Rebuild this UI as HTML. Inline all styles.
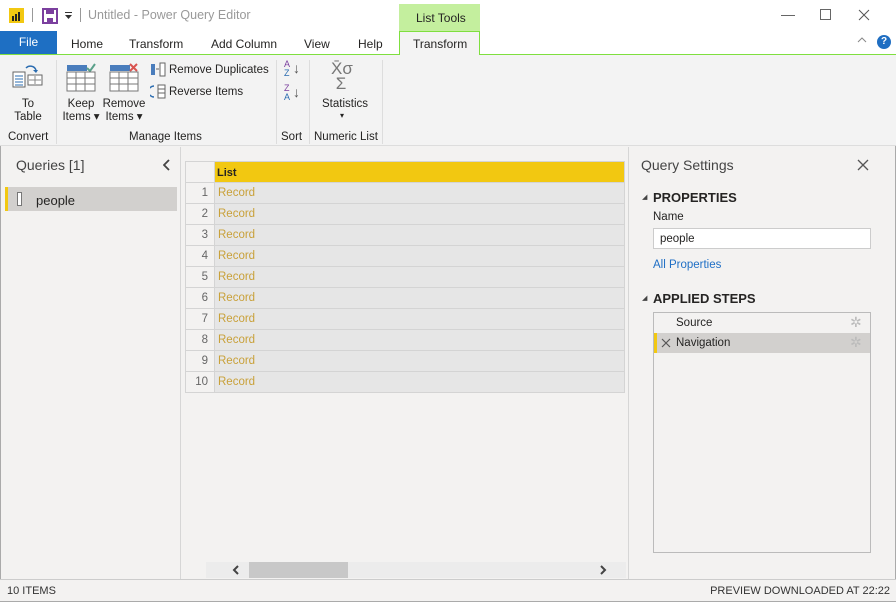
<!DOCTYPE html>
<html><head><meta charset="utf-8"><style>
*{box-sizing:border-box;margin:0;padding:0}
body{width:896px;height:602px;position:relative;overflow:hidden;background:#f3f2f1;font-family:"Liberation Sans",sans-serif;font-size:11.5px;color:#252423;outline:1px solid #aaa;outline-offset:-1px}
.a{position:absolute}
.t{white-space:nowrap}
</style></head><body>
<div class="a" style="left:0;top:0;width:896px;height:55px;background:#fff"></div>
<div class="a" style="left:9px;top:8px;width:15px;height:15px;background:#f2c811"></div>
<svg class="a" style="left:9px;top:8px" width="15" height="15"><rect x="3" y="8" width="2" height="5" fill="#222"/><rect x="6" y="6" width="2" height="7" fill="#222"/><rect x="9" y="4" width="2" height="9" fill="#222"/></svg>
<div class="a" style="left:32px;top:8px;width:1px;height:14px;background:#999"></div>
<svg class="a" style="left:42px;top:8px" width="16" height="16"><rect x="1" y="1" width="14" height="14" fill="none" stroke="#7b3f9e" stroke-width="2"/><rect x="4" y="2" width="8" height="4" fill="#7b3f9e"/><rect x="5" y="10" width="6" height="4" fill="#7b3f9e"/></svg>
<svg class="a" style="left:64px;top:12px" width="9" height="8"><rect x="1" y="0" width="7" height="1" fill="#333"/><path d="M1 3h7l-3.5 4z" fill="#333"/></svg>
<div class="a" style="left:80px;top:8px;width:1px;height:14px;background:#999"></div>
<div class="a t" style="left:88px;top:8px;font-size:12.5px;color:#999">Untitled - Power Query Editor</div>
<div class="a" style="left:399px;top:4px;width:81px;height:28px;background:#c4ef9e"></div>
<div class="a t" style="left:416px;top:11px;font-size:12px">List Tools</div>
<div class="a" style="left:781px;top:15px;width:14px;height:1px;background:#666"></div>
<div class="a" style="left:820px;top:9px;width:11px;height:11px;border:1px solid #666"></div>
<svg class="a" style="left:858px;top:9px" width="12" height="12"><path d="M1 1L11 11M11 1L1 11" stroke="#555" stroke-width="1"/></svg>
<div class="a" style="left:0;top:31px;width:57px;height:23px;background:#1e6fc3;color:#fff;text-align:center;line-height:23px;font-size:12px">File</div>
<div class="a t" style="left:71px;top:37px;font-size:12px">Home</div>
<div class="a t" style="left:129px;top:37px;font-size:12px">Transform</div>
<div class="a t" style="left:211px;top:37px;font-size:12px">Add Column</div>
<div class="a t" style="left:304px;top:37px;font-size:12px">View</div>
<div class="a t" style="left:358px;top:37px;font-size:12px">Help</div>
<div class="a" style="left:0;top:54px;width:896px;height:1px;background:#7fdf3f"></div>
<div class="a" style="left:399px;top:31px;width:81px;height:24px;background:#f3f3f3;border:1px solid #7fdf3f;border-bottom:none"></div>
<div class="a t" style="left:413px;top:37px;font-size:12px">Transform</div>
<svg class="a" style="left:857px;top:37px" width="10" height="6"><path d="M1 5L5 1L9 5" stroke="#888" fill="none"/></svg>
<div class="a" style="left:877px;top:35px;width:14px;height:14px;border-radius:50%;background:#1f6ec2;color:#fff;font-weight:bold;font-size:10px;text-align:center;line-height:14px">?</div>
<div class="a" style="left:0;top:55px;width:896px;height:91px;background:#f3f3f3;border-bottom:1px solid #ddd"></div>
<svg class="a" style="left:12px;top:62px" width="32" height="30"><path d="M14 6a6 6 0 0 1 10 2" stroke="#2b6cb0" fill="none" stroke-width="1.5"/><path d="M21 8h5l-2 3z" fill="#2b6cb0"/><rect x="1" y="10" width="12" height="15" fill="#fff" stroke="#666"/><path d="M3 14h8M3 17h8M3 20h8M3 23h8" stroke="#2b6cb0"/><rect x="16" y="13" width="14" height="10" fill="#fff" stroke="#666"/><path d="M17 18h12M23 14v8" stroke="#888"/></svg>
<div class="a" style="left:0;top:98px;width:56px;text-align:center;line-height:13px">To<br>Table</div>
<div class="a t" style="left:8px;top:131px">Convert</div>
<div class="a" style="left:56px;top:60px;width:1px;height:84px;background:#ddd"></div>
<svg class="a" style="left:66px;top:62px" width="30" height="30"><rect x="1" y="3" width="20" height="6" fill="#4a7dbc"/><path d="M21 6l3 3 5-7" stroke="#5aa08a" stroke-width="2" fill="none"/><rect x="1" y="10" width="28" height="19" fill="#fff" stroke="#777"/><path d="M1 16h28M1 22h28M10 10v19M19 10v19" stroke="#777"/></svg>
<div class="a" style="left:60px;top:98px;width:42px;text-align:center;line-height:13px">Keep<br>Items ▾</div>
<svg class="a" style="left:109px;top:62px" width="30" height="30"><rect x="1" y="3" width="20" height="6" fill="#4a7dbc"/><path d="M21 2l7 7M28 2l-7 7" stroke="#d9534f" stroke-width="2"/><rect x="1" y="10" width="28" height="19" fill="#fff" stroke="#777"/><path d="M1 16h28M1 22h28M10 10v19M19 10v19" stroke="#777"/></svg>
<div class="a" style="left:102px;top:98px;width:44px;text-align:center;line-height:13px">Remove<br>Items ▾</div>
<svg class="a" style="left:150px;top:62px" width="16" height="15"><rect x="1" y="2" width="4" height="11" fill="#4a7dbc"/><rect x="10" y="1" width="5" height="13" fill="#fff" stroke="#666"/><path d="M6 7h3" stroke="#666"/></svg>
<div class="a t" style="left:169px;top:64px">Remove Duplicates</div>
<svg class="a" style="left:150px;top:84px" width="16" height="15"><path d="M4 2a4 4 0 0 0 0 11" stroke="#2b6cb0" fill="none" stroke-width="1.5"/><rect x="8" y="1" width="7" height="13" fill="#fff" stroke="#666"/><path d="M8 5h7M8 9h7" stroke="#666"/></svg>
<div class="a t" style="left:169px;top:86px">Reverse Items</div>
<div class="a t" style="left:129px;top:131px">Manage Items</div>
<div class="a" style="left:276px;top:60px;width:1px;height:84px;background:#ddd"></div>
<div class="a" style="left:284px;top:60px;font-size:9px;line-height:9px;color:#7b3f9e">A<br><span style="color:#2b6cb0">Z</span></div>
<div class="a" style="left:284px;top:84px;font-size:9px;line-height:9px;color:#7b3f9e">Z<br><span style="color:#2b6cb0">A</span></div>
<div class="a" style="left:293px;top:60px;font-size:14px;color:#555">↓</div>
<div class="a" style="left:293px;top:84px;font-size:14px;color:#555">↓</div>
<div class="a t" style="left:281px;top:131px">Sort</div>
<div class="a" style="left:309px;top:60px;width:1px;height:84px;background:#ddd"></div>
<div class="a t" style="left:331px;top:61px;font-size:17px;color:#777;line-height:15px">X̄σ<br>&nbsp;Σ</div>
<div class="a t" style="left:322px;top:98px">Statistics</div>
<div class="a t" style="left:340px;top:111px;font-size:8px">▾</div>
<div class="a t" style="left:314px;top:131px">Numeric List</div>
<div class="a" style="left:382px;top:60px;width:1px;height:84px;background:#ddd"></div>
<div class="a" style="left:180px;top:147px;width:1px;height:432px;background:#d6d6d6"></div>
<div class="a t" style="left:16px;top:157px;font-size:14px;color:#444">Queries [1]</div>
<svg class="a" style="left:163px;top:159px" width="8" height="12"><path d="M6 1L1 6L6 11" stroke="#444" stroke-width="1.8" fill="none"/></svg>
<div class="a" style="left:5px;top:187px;width:172px;height:24px;background:#d2d0ce;border-left:3px solid #f2c811"></div>
<div class="a" style="left:17px;top:192px;width:5px;height:14px;border:1px solid #777;background:#fff"></div>
<div class="a t" style="left:36px;top:193px;font-size:13px">people</div>
<div class="a" style="left:628px;top:147px;width:1px;height:432px;background:#d6d6d6"></div>
<div class="a" style="left:185px;top:161px;width:440px;height:232px;border:1px solid #d4d4d4;background:#d4d4d4"></div>
<div class="a" style="left:186px;top:162px;width:28px;height:20px;background:#f3f2f1"></div>
<div class="a" style="left:215px;top:162px;width:409px;height:20px;background:#f2c811;font-weight:bold;font-size:11px;padding:5px 0 0 2px">List</div>
<div id="rows"></div>
<script>
var h='';for(var i=0;i<10;i++){var y=183+i*21;h+='<div class="a" style="left:186px;top:'+y+'px;width:28px;height:20px;background:#f3f2f1;color:#666;text-align:right;padding:4px 6px 0 0">'+(i+1)+'</div><div class="a" style="left:215px;top:'+y+'px;width:409px;height:20px;background:#e6e6e6;color:#c9a13a;padding:4px 0 0 3px">Record</div>';}
document.getElementById('rows').innerHTML=h;
</script>
<div class="a" style="left:206px;top:562px;width:420px;height:16px;background:#ececec"></div>
<div class="a" style="left:249px;top:562px;width:99px;height:16px;background:#c8c8c8"></div>
<svg class="a" style="left:232px;top:565px" width="8" height="10"><path d="M6 1L2 5L6 9" stroke="#444" stroke-width="2" fill="none"/></svg>
<svg class="a" style="left:599px;top:565px" width="8" height="10"><path d="M2 1L6 5L2 9" stroke="#444" stroke-width="2" fill="none"/></svg>
<div class="a t" style="left:641px;top:157px;font-size:14px;color:#444">Query Settings</div>
<svg class="a" style="left:857px;top:159px" width="12" height="12"><path d="M1 1L11 11M11 1L1 11" stroke="#555" stroke-width="1.3"/></svg>
<div class="a t" style="left:642px;top:193px;font-size:7px;color:#444">◢</div>
<div class="a t" style="left:653px;top:190px;font-size:13px;font-weight:bold">PROPERTIES</div>
<div class="a t" style="left:653px;top:211px">Name</div>
<div class="a" style="left:653px;top:228px;width:218px;height:21px;background:#fff;border:1px solid #ccc;padding:4px 0 0 6px">people</div>
<div class="a t" style="left:653px;top:259px;color:#1f6fc5">All Properties</div>
<div class="a t" style="left:642px;top:294px;font-size:7px;color:#444">◢</div>
<div class="a t" style="left:653px;top:291px;font-size:13px;font-weight:bold">APPLIED STEPS</div>
<div class="a" style="left:653px;top:312px;width:218px;height:241px;background:#f3f2f1;border:1px solid #bbb"></div>
<div class="a t" style="left:676px;top:317px">Source</div>
<div class="a t" style="left:850px;top:314px;color:#bbb;font-size:14px">✲</div>
<div class="a" style="left:654px;top:333px;width:216px;height:20px;background:#d2d0ce;border-left:3px solid #f2c811"></div>
<svg class="a" style="left:661px;top:338px" width="10" height="10"><path d="M1 1L9 9M9 1L1 9" stroke="#555" stroke-width="1.2"/></svg>
<div class="a t" style="left:676px;top:337px">Navigation</div>
<div class="a t" style="left:850px;top:334px;color:#bbb;font-size:14px">✲</div>
<div class="a" style="left:0;top:579px;width:896px;height:23px;background:#f3f2f1;border-top:1px solid #ccc;border-bottom:1px solid #aaa"></div>
<div class="a t" style="left:7px;top:585px;font-size:11px;color:#333">10 ITEMS</div>
<div class="a t" style="right:6px;top:585px;font-size:11px;color:#333">PREVIEW DOWNLOADED AT 22:22</div>
</body></html>
